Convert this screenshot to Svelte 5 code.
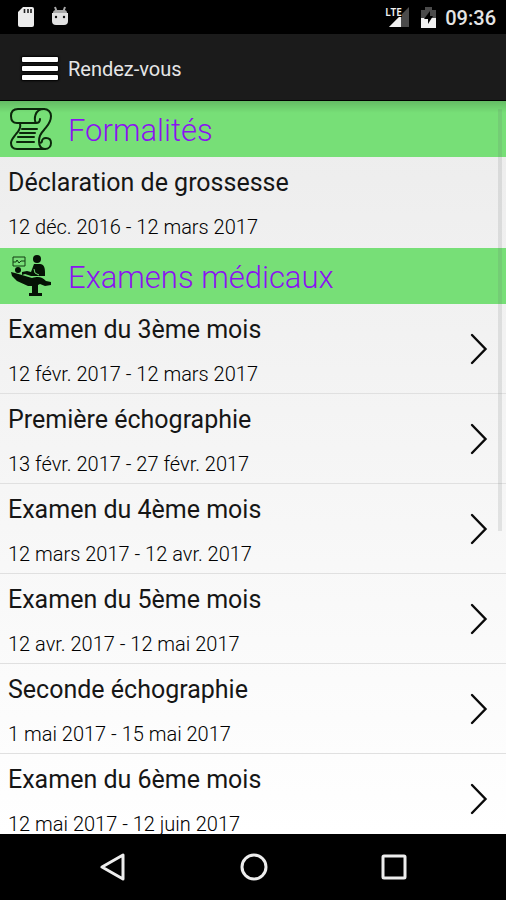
<script>
  const sections = [
    {
      title: 'Formalités',
      icon: 'scroll',
      items: [{ name: 'Déclaration de grossesse', dates: '12 déc. 2016 - 12 mars 2017', link: false }]
    },
    {
      title: 'Examens médicaux',
      icon: 'exam',
      items: [
        { name: 'Examen du 3ème mois', dates: '12 févr. 2017 - 12 mars 2017', link: true },
        { name: 'Première échographie', dates: '13 févr. 2017 - 27 févr. 2017', link: true },
        { name: 'Examen du 4ème mois', dates: '12 mars 2017 - 12 avr. 2017', link: true },
        { name: 'Examen du 5ème mois', dates: '12 avr. 2017 - 12 mai 2017', link: true },
        { name: 'Seconde échographie', dates: '1 mai 2017 - 15 mai 2017', link: true },
        { name: 'Examen du 6ème mois', dates: '12 mai 2017 - 12 juin 2017', link: true }
      ]
    }
  ];
</script>

<div class="screen">
  <div class="status">
    <svg class="sd" width="18" height="22" viewBox="0 0 18 22" aria-hidden="true">
      <path d="M6 1h9a2 2 0 0 1 2 2v16a2 2 0 0 1-2 2H3a2 2 0 0 1-2-2V6z" fill="#ececec" />
      <path d="M7.500 3v4M11 3v4M14 3v4" stroke="#222" stroke-width="1.600" />
    </svg>
    <svg width="18" height="22" viewBox="0 0 18 22" aria-hidden="true">
      <path d="M4 1l1.500 4M14 1l-1.500 4" stroke="#aaa" stroke-width="2" />
      <path d="M1 7h16v8q0 4-4 4H5q-4 0-4-4z" fill="#e2e2e2" />
      <path d="M2 7q0-3 3-3h8q3 0 3 3z" fill="#aaa" />
      <circle cx="5" cy="11" r="1.200" fill="#111" />
      <circle cx="13" cy="11" r="1.200" fill="#111" />
    </svg>
    <div class="signal">
      <svg width="20" height="20" viewBox="0 0 20 20" aria-hidden="true">
        <path d="M0 20L20 0v20z" fill="#4b4b4b" />
        <path d="M0 20L12 8v12z" fill="#f0f0f0" />
      </svg>
      <span>LTE</span>
    </div>
    <svg class="battery" width="15" height="21" viewBox="0 0 15 21" aria-hidden="true">
      <path d="M0 3h4V0h7v3h4v8H0z" fill="#4b4b4b" />
      <path d="M0 11h15v10H0z" fill="#f0f0f0" />
      <path d="M9 4L3 12h4v5l5-8H9z" fill="#000" />
    </svg>
    <time>09:36</time>
  </div>

  <header>
    <button class="menu" aria-label="Menu"><i></i><i></i><i></i></button>
    <h1>Rendez-vous</h1>
  </header>

  <main>
    {#each sections as section}
      <section>
        <h2>
          {#if section.icon === 'scroll'}
            <svg width="44" height="44" viewBox="0 0 44 44" fill="none" stroke="#0b260b" stroke-width="2" stroke-linecap="round" stroke-linejoin="round" aria-hidden="true">
              <path d="M35 2H9C4 2 2 5 2 9s2 7 6 7h3c1 4-1 8-4 11c-3 4-5 6-5 9c0 4 2 6 6 6h28" />
              <path d="M11 16h16c-2-3-2-14 8-14c4 0 7 3 7 7c0 7-4 10-7 14c-3 3-5 7-5 11c0 5 2 8 6 8s6-3 6-6s-2-5-5-5s-4 2-4 3q0 2-3 2" />
              <path d="M27 16c3 0 4-2 4-4" />
              <path d="M13 22h15M11 26h15M9 30h16M8 35h17" />
            </svg>
          {:else}
            <svg width="44" height="44" viewBox="0 0 44 44" aria-hidden="true">
              <path d="M4 3h12v9H4zM4 8h3l1-2 2 3 2-2h4" fill="none" stroke="#123c12" />
              <circle cx="28" cy="5" r="4" fill="#051205" />
              <path d="M25 10h6c4 0 5 4 5 8v4H22l-6-2-3 1v-3l5-1 4 1z" fill="#051205" />
              <circle cx="9" cy="16" r="3" fill="#051205" />
              <path d="M2 18l4 1 7 2 10 3c7-2 10-1 14 3l5 1v3l-6 1-5-2-4 2h-8l-11-5-5-5z" fill="#051205" />
              <path d="M23 30h6v9h4v3H20v-3h3z" fill="#051205" />
              <path d="M25 15l1 4 4 2" fill="none" stroke="#77df77" />
            </svg>
          {/if}
          <span>{section.title}</span>
        </h2>
        <ul>
          {#each section.items as item}
            <li>
              <svelte:element this={item.link ? 'a' : 'div'} class="row" href={item.link ? '#rdv' : undefined}>
                <span class="text">
                  <span class="name">{item.name}</span>
                  <span class="dates">{item.dates}</span>
                </span>
                {#if item.link}
                  <svg width="18" height="32" viewBox="0 0 18 32" fill="none" stroke="#0a0a0a" stroke-width="2.400" stroke-linecap="round" aria-hidden="true">
                    <path d="M2 2L15.500 16 2 30" />
                  </svg>
                {/if}
              </svelte:element>
            </li>
          {/each}
        </ul>
      </section>
    {/each}
    <div class="thumb"></div>
  </main>

  <nav>
    <button aria-label="Retour">
      <svg width="28" height="28" viewBox="0 0 28 28"><path d="M24 2v24L3 14z" /></svg>
    </button>
    <button aria-label="Accueil">
      <svg width="28" height="28" viewBox="0 0 28 28"><circle cx="14" cy="14" r="12" /></svg>
    </button>
    <button aria-label="Applications récentes">
      <svg width="28" height="28" viewBox="0 0 28 28"><rect x="3" y="3" width="22" height="22" rx="1" /></svg>
    </button>
  </nav>
</div>

<style>
  :global(body) {
    margin: 0;
    background: #000;
  }
  .screen {
    display: flex;
    flex-direction: column;
    height: 100vh;
    font-family: Roboto, sans-serif;
    color: #161616;
  }
  .status {
    display: flex;
    flex: none;
    align-items: center;
    gap: 16px;
    height: 34px;
    padding: 0 10px 0 17px;
    background: #000;
  }
  .signal {
    position: relative;
    display: flex;
    margin-left: auto;
    padding: 0 0 0 6px;
  }
  .signal span {
    position: absolute;
    top: 0;
    left: 2px;
    color: #f2f2f2;
    font-family: 'Noto Sans', sans-serif;
    font-size: 10px;
    font-weight: 600;
    line-height: 10px;
    background: #000;
  }
  .battery {
    margin-left: -4px;
  }
  time {
    margin-left: -7px;
    padding-top: 2px;
    color: #e4e4e4;
    font-size: 20px;
    font-weight: 500;
    line-height: 24px;
  }
  header {
    display: flex;
    flex: none;
    align-items: center;
    gap: 10px;
    height: 67px;
    padding: 0 22px;
    box-sizing: border-box;
    background: #1b1b1b;
    border-bottom: 1px solid #000;
  }
  button {
    padding: 0;
    border: 0;
    background: none;
  }
  .menu {
    display: flex;
    flex-direction: column;
    gap: 4px;
    width: 36px;
    padding-top: 2px;
  }
  .menu i {
    height: 5px;
    background: #fff;
    border-radius: 1px;
    box-shadow: 0 0 2px 1px #000;
  }
  h1 {
    margin: 0;
    padding-top: 4px;
    color: #e6e6e6;
    font-size: 20px;
    font-weight: 400;
    line-height: 24px;
  }
  main {
    position: relative;
    flex: 1;
    min-height: 0;
    overflow: hidden;
    background: linear-gradient(#ececec, #fff);
  }
  main::before {
    content: '';
    position: absolute;
    inset: 0 0 auto;
    height: 12px;
    background: linear-gradient(rgba(0, 0, 0, 0.16), transparent);
  }
  section + section {
    margin-top: 1px;
  }
  h2 {
    display: flex;
    align-items: center;
    gap: 15px;
    height: 56px;
    margin: 0;
    padding: 0 9px;
    color: #8a14f0;
    background: #77df77;
    font-size: 31px;
    font-weight: 300;
    line-height: 36px;
  }
  h2 span {
    padding-top: 4px;
  }
  ul {
    margin: 0;
    padding: 0;
    list-style: none;
  }
  .row {
    display: flex;
    align-items: center;
    justify-content: space-between;
    height: 90px;
    padding: 0 18px 0 8px;
    box-sizing: border-box;
    border-bottom: 1px solid #e0e0e0;
    color: inherit;
    text-decoration: none;
  }
  li:last-child .row {
    border-color: transparent;
  }
  .text {
    display: flex;
    flex-direction: column;
    gap: 18px;
  }
  .name {
    font-size: 25px;
    font-weight: 400;
    line-height: 32px;
  }
  .dates {
    color: #000;
    font-size: 20px;
    font-weight: 300;
    line-height: 20px;
  }
  .thumb {
    position: absolute;
    top: 8px;
    right: 4px;
    width: 4px;
    height: 422px;
    background: rgba(100, 110, 110, 0.15);
  }
  nav {
    display: flex;
    flex: none;
    align-items: center;
    justify-content: space-between;
    height: 66px;
    padding: 0 98px 0 99px;
    box-sizing: border-box;
    background: #000;
  }
  nav button {
    display: flex;
  }
  nav svg {
    fill: none;
    stroke: #ededed;
    stroke-width: 3;
    stroke-linejoin: round;
  }
</style>
